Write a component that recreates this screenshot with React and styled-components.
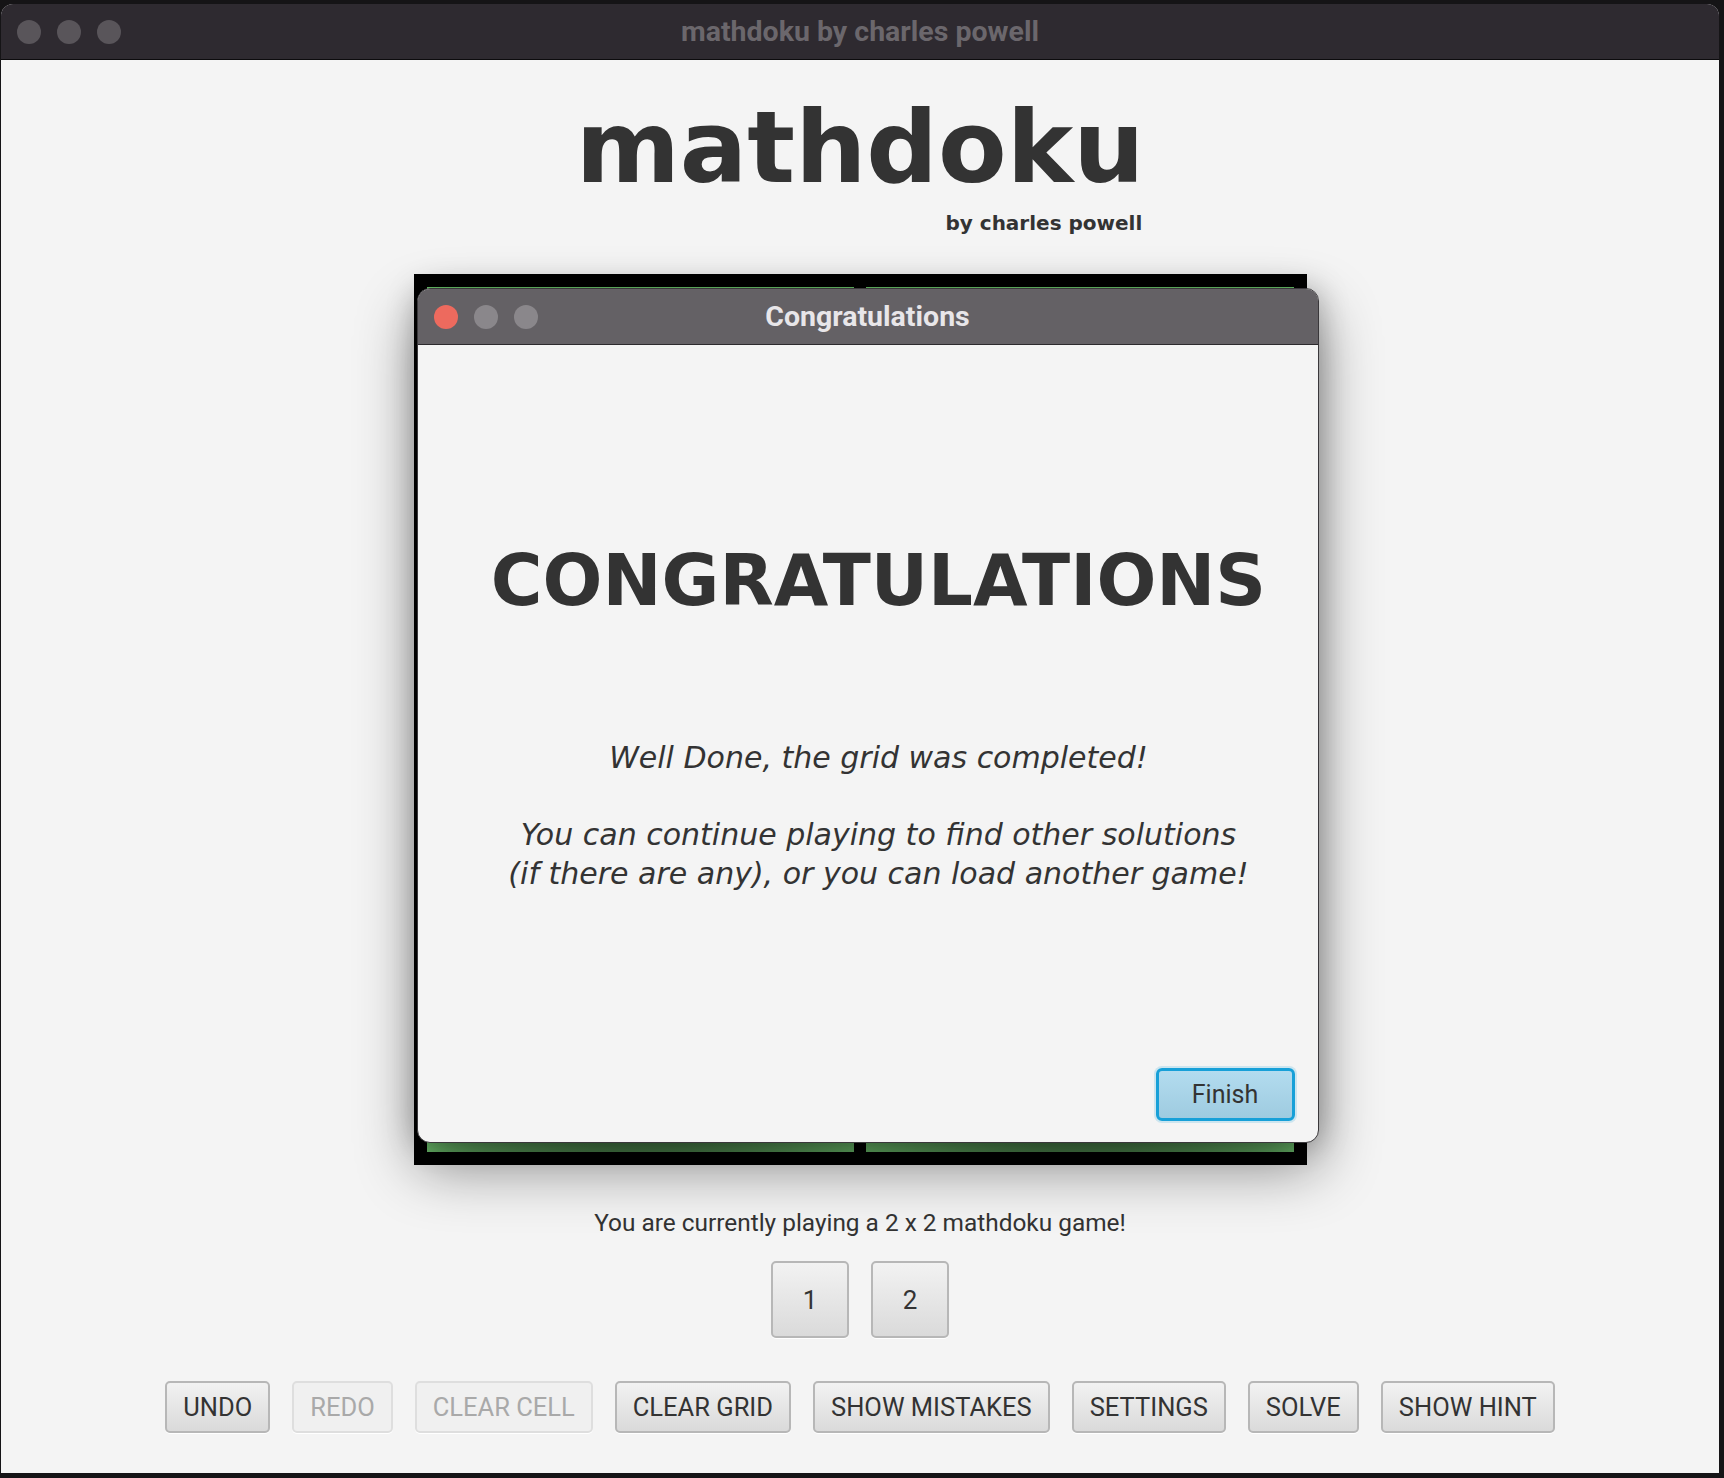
import styled, { createGlobalStyle } from "styled-components";

const GlobalStyle = createGlobalStyle`
  html, body {
    margin: 0;
    padding: 0;
    background: #151416;
  }

  * {
    box-sizing: border-box;
  }
`;

const Screen = styled.div`
  width: 1724px;
  height: 1478px;
  padding: 4px 5px 5px 1px;
  overflow: hidden;
`;

const Window = styled.div`
  height: 100%;
  display: flex;
  flex-direction: column;
  background: #f4f4f4;
  border-radius: 12px 12px 0 0;
  overflow: hidden;
`;

const TitleBar = styled.div`
  height: 56px;
  flex: none;
  display: grid;
  grid-template-columns: 1fr auto 1fr;
  align-items: center;
  padding: 0 16px;
  background: ${({ $light }) => ($light ? "#646165" : "#2e2a30")};
  border-bottom: 1px solid ${({ $light }) => ($light ? "#2c2a2d" : "#0c0b0d")};
`;

const Lights = styled.div`
  display: flex;
  gap: 16px;
`;

const Light = styled.span`
  width: 24px;
  height: 24px;
  border-radius: 50%;
  background: ${({ $color }) => $color};
`;

const TitleText = styled.div`
  font-family: Roboto, "Liberation Sans", sans-serif;
  font-weight: 700;
  font-size: 28.5px;
  color: ${({ $color }) => $color};
`;

const Content = styled.div`
  flex: 1;
  display: flex;
  flex-direction: column;
  align-items: center;
`;

const Header = styled.div`
  display: flex;
  flex-direction: column;
  align-items: flex-end;
  margin-top: 28px;
`;

const Logo = styled.h1`
  margin: 0;
  font-family: "DejaVu Sans", Verdana, sans-serif;
  font-weight: 700;
  font-size: 100px;
  line-height: 120px;
  color: #333333;
`;

const Byline = styled.div`
  font-family: "DejaVu Sans", Verdana, sans-serif;
  font-weight: 700;
  font-size: 20px;
  line-height: 24px;
  color: #333333;
  margin: 3px 2px 0 0;
`;

const Board = styled.div`
  position: relative;
  margin-top: 39px;
  width: 893px;
  height: 891px;
  padding: 13px;
  background: #000;
  display: grid;
  grid-template-columns: 1fr 1fr;
  grid-template-rows: 1fr 1fr;
  gap: 12px;
`;

const Cell = styled.div`
  background: radial-gradient(ellipse farthest-corner at center, #3e6b3e 55%, #74cc74 100%);
  box-shadow: inset 0 2px 0 #6fcf6f;
`;

const Dialog = styled.div`
  position: absolute;
  left: 3px;
  top: 14px;
  width: 902px;
  height: 855px;
  display: flex;
  flex-direction: column;
  background: #f4f4f4;
  border: 1px solid #3a383b;
  border-radius: 13px;
  overflow: hidden;
  box-shadow: 0 24px 60px rgba(0, 0, 0, 0.45), 0 0 30px rgba(0, 0, 0, 0.25);
`;

const DialogBody = styled.div`
  flex: 1;
  display: flex;
  flex-direction: column;
  align-items: center;
  padding: 200px 23px 21px 45px;
`;

const Headline = styled.div`
  font-family: "DejaVu Sans", Verdana, sans-serif;
  font-weight: 700;
  font-size: 70.5px;
  line-height: 72px;
  color: #333333;
`;

const Message = styled.p`
  margin: 122px 0 0;
  font-family: "DejaVu Sans", Verdana, sans-serif;
  font-style: italic;
  font-size: 30px;
  line-height: 38.5px;
  text-align: center;
  color: #333333;
`;

const Footer = styled.div`
  margin-top: auto;
  align-self: stretch;
  display: flex;
  justify-content: flex-end;
`;

const FinishButton = styled.button`
  width: 139px;
  height: 53px;
  font-family: Roboto, "Liberation Sans", sans-serif;
  font-size: 25px;
  color: #333333;
  background: linear-gradient(#b3dcef, #9ecbe0);
  border: 3px solid #17a0d8;
  border-radius: 6px;
  box-shadow: 0 0 0 2px rgba(23, 160, 216, 0.18);
`;

const Status = styled.div`
  margin-top: 44px;
  font-family: Roboto, "Liberation Sans", sans-serif;
  font-size: 24.4px;
  line-height: 28px;
  color: #333333;
`;

const NumberRow = styled.div`
  display: flex;
  gap: 22px;
  margin-top: 24px;
`;

const Button = styled.button`
  height: ${({ $square }) => ($square ? "77px" : "52px")};
  width: ${({ $square }) => ($square ? "78px" : "auto")};
  padding: ${({ $square }) => ($square ? "0" : "0 16px")};
  font-family: Roboto, "Liberation Sans", sans-serif;
  font-size: ${({ $square }) => ($square ? "26px" : "25.5px")};
  color: ${({ disabled }) => (disabled ? "#a9a9a9" : "#333333")};
  background: ${({ disabled }) =>
    disabled ? "#f0f0f0" : "linear-gradient(#f2f2f2, #dadada)"};
  border: 2px solid ${({ disabled }) => (disabled ? "#dedede" : "#b7b7b7")};
  border-radius: 5px;
  box-shadow: 0 1px 0 #ffffff;
`;

const Toolbar = styled.div`
  display: flex;
  gap: 22px;
  margin-top: 43px;
`;

const tools = [
  { label: "UNDO" },
  { label: "REDO", disabled: true },
  { label: "CLEAR CELL", disabled: true },
  { label: "CLEAR GRID" },
  { label: "SHOW MISTAKES" },
  { label: "SETTINGS" },
  { label: "SOLVE" },
  { label: "SHOW HINT" },
];

function TrafficLights({ colors }) {
  return (
    <Lights>
      {colors.map((c, i) => (
        <Light key={i} $color={c} />
      ))}
    </Lights>
  );
}

function App() {
  return (
    <Screen>
      <GlobalStyle />
      <Window>
        <TitleBar>
          <TrafficLights colors={["#59555a", "#59555a", "#59555a"]} />
          <TitleText $color="#6b676c">mathdoku by charles powell</TitleText>
          <span />
        </TitleBar>

        <Content>
          <Header>
            <Logo>mathdoku</Logo>
            <Byline>by charles powell</Byline>
          </Header>

          <Board>
            <Cell />
            <Cell />
            <Cell />
            <Cell />

            <Dialog>
              <TitleBar $light>
                <TrafficLights colors={["#ed6a5e", "#8a878b", "#8a878b"]} />
                <TitleText $color="#e8e6e9">Congratulations</TitleText>
                <span />
              </TitleBar>
              <DialogBody>
                <Headline>CONGRATULATIONS</Headline>
                <Message>
                  Well Done, the grid was completed!
                  <br />
                  <br />
                  You can continue playing to find other solutions
                  <br />
                  (if there are any), or you can load another game!
                </Message>
                <Footer>
                  <FinishButton>Finish</FinishButton>
                </Footer>
              </DialogBody>
            </Dialog>
          </Board>

          <Status>You are currently playing a 2 x 2 mathdoku game!</Status>

          <NumberRow>
            <Button $square>1</Button>
            <Button $square>2</Button>
          </NumberRow>

          <Toolbar>
            {tools.map((t) => (
              <Button key={t.label} disabled={t.disabled}>
                {t.label}
              </Button>
            ))}
          </Toolbar>
        </Content>
      </Window>
    </Screen>
  );
}

export default App;
